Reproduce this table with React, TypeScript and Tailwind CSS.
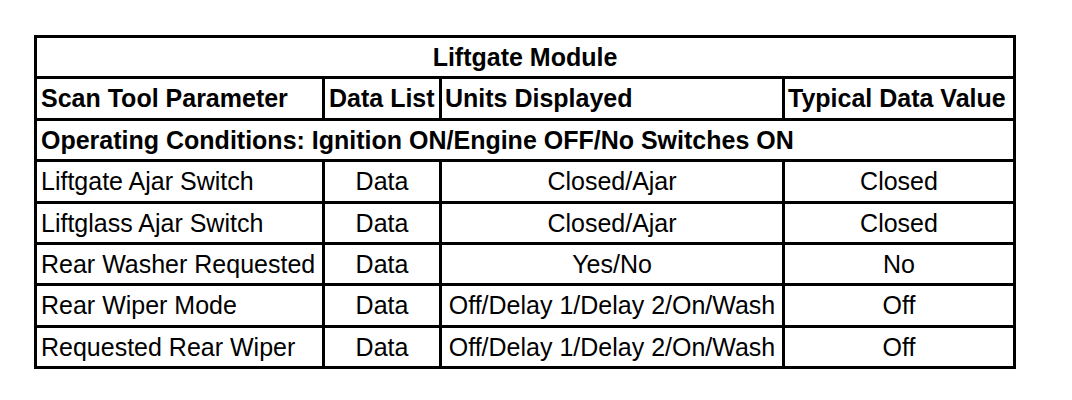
import React from "react";

const rows = [
  ["Liftgate Ajar Switch", "Data", "Closed/Ajar", "Closed"],
  ["Liftglass Ajar Switch", "Data", "Closed/Ajar", "Closed"],
  ["Rear Washer Requested", "Data", "Yes/No", "No"],
  ["Rear Wiper Mode", "Data", "Off/Delay 1/Delay 2/On/Wash", "Off"],
  ["Requested Rear Wiper", "Data", "Off/Delay 1/Delay 2/On/Wash", "Off"],
];

export default function App() {
  return (
    <div
      className="w-[1072px] h-[400px] bg-white pt-[35px] pl-[34px]"
      style={{ fontFamily: '"Liberation Sans", Arial, sans-serif' }}
    >
      <div className="grid w-[982px] grid-cols-[285px_114px_340px_228px] grid-rows-[38px_39px_38px_39px_38px_38px_39px_38px] gap-[3px] bg-black p-[3px] text-[25px] leading-none text-black">
        <div className="col-span-4 flex items-center justify-center bg-white font-bold">
          Liftgate Module
        </div>
        <div className="flex items-center bg-white pl-[4px] font-bold">Scan Tool Parameter</div>
        <div className="flex items-center bg-white pl-[4px] font-bold">Data List</div>
        <div className="flex items-center bg-white pl-[3px] font-bold">Units Displayed</div>
        <div className="flex items-center bg-white pl-[3px] font-bold">Typical Data Value</div>
        <div className="col-span-4 flex items-center bg-white pl-[4px] font-bold">
          Operating Conditions: Ignition ON/Engine OFF/No Switches ON
        </div>
        {rows.map((r, i) => (
          <React.Fragment key={i}>
            <div className="flex items-center bg-white pl-[4px]">{r[0]}</div>
            <div className="flex items-center justify-center bg-white">{r[1]}</div>
            <div className="flex items-center justify-center bg-white">{r[2]}</div>
            <div className="flex items-center justify-center bg-white">{r[3]}</div>
          </React.Fragment>
        ))}
      </div>
    </div>
  );
}
